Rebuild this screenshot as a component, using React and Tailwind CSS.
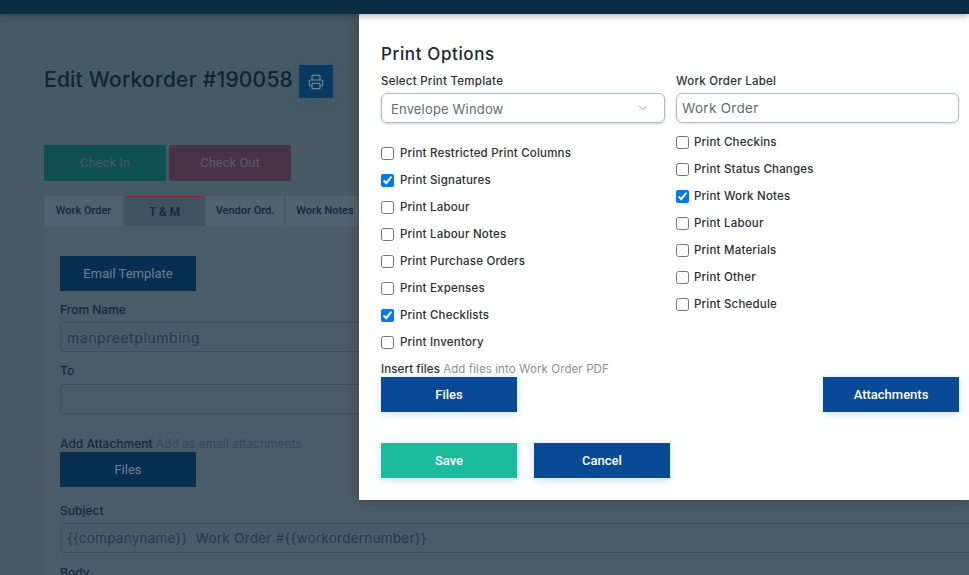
import React from "react";
import { Printer, ChevronDown } from "lucide-react";

const mont = "font-['Inter','Noto_Sans',sans-serif]";
const robo = "font-['Roboto',sans-serif]";

function BgInput({ value, className = "" }) {
  return (
    <div className={`h-[30px] w-[1000px] whitespace-pre rounded-[4px] border border-[#3b505c] px-[6px] leading-[29px] text-[#1f3a4d] ${className}`}>
      {value}
    </div>
  );
}

function BgLabel({ children, className = "" }) {
  return <div className={`text-[12px] font-medium leading-[14px] text-[#12293a] ${className}`}>{children}</div>;
}

function Tab({ children, active, width }) {
  return (
    <div
      className={`flex h-[30px] shrink-0 items-center justify-center ${robo} font-medium text-[#12293a] ${width} ${
        active ? "border-t border-[#7d2a36] bg-[#3f535f] text-[12px]" : "bg-[#4f626e] text-[11px]"
      }`}
    >
      {children}
    </div>
  );
}

function Check({ label, checked, gap }) {
  return (
    <label className={`flex h-[27px] items-center ${gap} text-[11.5px] font-medium tracking-[0.2px] text-[#2a2f33]`}>
      <input type="checkbox" defaultChecked={checked} className="m-0 h-[13px] w-[13px]" />
      <span>{label}</span>
    </label>
  );
}

function ModalButton({ children, green }) {
  return (
    <button
      className={`h-[35px] w-[136px] ${robo} text-[13px] font-medium text-white shadow-[0_2px_8px_rgba(80,170,230,0.35)] ${
        green ? "bg-[#1abc9c]" : "bg-[#084a96]"
      }`}
    >
      {children}
    </button>
  );
}

export default function App() {
  const left = [
    ["Print Restricted Print Columns", false],
    ["Print Signatures", true],
    ["Print Labour", false],
    ["Print Labour Notes", false],
    ["Print Purchase Orders", false],
    ["Print Expenses", false],
    ["Print Checklists", true],
    ["Print Inventory", false],
  ];
  const right = [
    ["Print Checkins", false],
    ["Print Status Changes", false],
    ["Print Work Notes", true],
    ["Print Labour", false],
    ["Print Materials", false],
    ["Print Other", false],
    ["Print Schedule", false],
  ];

  return (
    <div className={`relative h-[575px] w-[969px] overflow-hidden bg-[#465a64] ${mont}`}>
      <div className="relative z-10 h-[14px] bg-[#0a2d42] shadow-[0_2px_6px_rgba(0,0,0,0.3)]" />

      {/* Dimmed page behind the dialog */}
      <div className="pl-[44px]">
        <div className="flex h-[51px] items-start pt-[51px]">
          <h1 className="mt-px text-[21px] font-medium leading-[28px] tracking-[0.22px] text-[#0f2433]">Edit Workorder #190058</h1>
          <div className="ml-[6px] flex h-[33px] w-[34px] items-center justify-center bg-[#0a3a62] shadow-[0_2px_8px_rgba(40,90,130,0.4)]">
            <Printer size={16} strokeWidth={1.75} className="text-[#6f8795]" />
          </div>
        </div>

        <div className="mt-[80px] flex gap-[3px]">
          <div className={`flex h-[36px] w-[122px] items-center justify-center rounded-[2px] bg-[#0f4f4e] ${robo} text-[13px] text-[#455b65]`}>Check In</div>
          <div className={`flex h-[36px] w-[122px] items-center justify-center rounded-[2px] bg-[#483246] ${robo} text-[13px] text-[#5d5f70]`}>Check Out</div>
        </div>

        <div className="mt-[15px] flex gap-[2px]">
          <Tab width="w-[79px]">Work Order</Tab>
          <Tab width="w-[79px]" active>T &amp; M</Tab>
          <Tab width="w-[78px]">Vendor Ord.</Tab>
          <Tab width="w-[78px]">Work Notes</Tab>
        </div>

        <div className="bg-[#4a5c67] pl-[16px] pt-[30px]">
          <div className={`flex h-[35px] w-[136px] items-center justify-center bg-[#082f50] ${robo} text-[13px] text-[#6c8090]`}>Email Template</div>
          <BgLabel className="mt-[12px]">From Name</BgLabel>
          <div className="mt-[5px]"><BgInput value="manpreetplumbing" className="text-[14px] tracking-[0.55px]" /></div>
          <BgLabel className="mt-[12px]">To</BgLabel>
          <div className="mt-[6px]"><BgInput value="" /></div>
          <div className="mt-[23px] text-[12px] font-medium leading-[14px] text-[#12293a]">
            Add Attachment <span className="font-normal text-[#35495a]">Add as email attachments</span>
          </div>
          <div className={`mt-px flex h-[35px] w-[136px] items-center justify-center bg-[#082f50] ${robo} text-[13px] text-[#6c8090]`}>Files</div>
          <BgLabel className="mt-[17px]">Subject</BgLabel>
          <div className="mt-[5px]"><BgInput value="{{companyname}}  Work Order #{{workordernumber}}" className="text-[13.5px] tracking-[0.24px]" /></div>
          <BgLabel className="mt-[13px]">Body</BgLabel>
        </div>
      </div>

      {/* Print Options dialog */}
      <div className="absolute left-[359px] top-[14px] h-[486px] w-[610px] bg-white pl-[22px] pr-[10px] pt-[30px] shadow-[0_0_12px_rgba(0,0,0,0.25)]">
        <h2 className="text-[17px] font-medium leading-[20px] tracking-[0.62px] text-[#20262b]">Print Options</h2>
        <div className="mt-[10px] grid grid-cols-[284px_283px] gap-x-[11px]">
          <div>
            <div className="text-[11.5px] font-medium leading-[14px] tracking-[0.25px] text-[#2a2f33]">Select Print Template</div>
            <div className="mt-[5px] flex h-[30px] items-center justify-between rounded-[6px] border border-[#a9bccb] pl-[9px] pr-[14px] text-[13px] tracking-[0.17px] text-[#646b72] shadow-[0_1px_3px_rgba(90,120,150,0.35)]">
              <span className="pt-[3px]">Envelope Window</span>
              <ChevronDown size={14} strokeWidth={1.25} className="text-[#7a848c]" />
            </div>
            <div className="mt-[17px]">
              {left.map(([l, c]) => <Check key={l} label={l} checked={c} gap="gap-[6px]" />)}
            </div>
            <div className="mt-[6px] text-[11.5px] font-medium leading-[14px] tracking-[0.1px] text-[#2a2f33]">
              Insert files <span className="font-normal text-[#8a9097]">Add files into Work Order PDF</span>
            </div>
            <div className="mt-px"><ModalButton>Files</ModalButton></div>
          </div>
          <div className="flex flex-col">
            <div className="text-[11.5px] font-medium leading-[14px] tracking-[0.25px] text-[#2a2f33]">Work Order Label</div>
            <div className="mt-[5px] flex h-[30px] items-center rounded-[6px] border border-[#a9bccb] pl-[5px] text-[13.5px] tracking-[0.3px] text-[#646b72] shadow-[0_1px_3px_rgba(90,120,150,0.2)]">Work Order</div>
            <div className="mt-[6px]">
              {right.map(([l, c]) => <Check key={l} label={l} checked={c} gap="gap-[5px]" />)}
            </div>
            <div className="mt-auto self-end"><ModalButton>Attachments</ModalButton></div>
          </div>
        </div>
        <div className="mt-[31px] flex gap-[17px]">
          <ModalButton green>Save</ModalButton>
          <ModalButton>Cancel</ModalButton>
        </div>
      </div>
    </div>
  );
}
